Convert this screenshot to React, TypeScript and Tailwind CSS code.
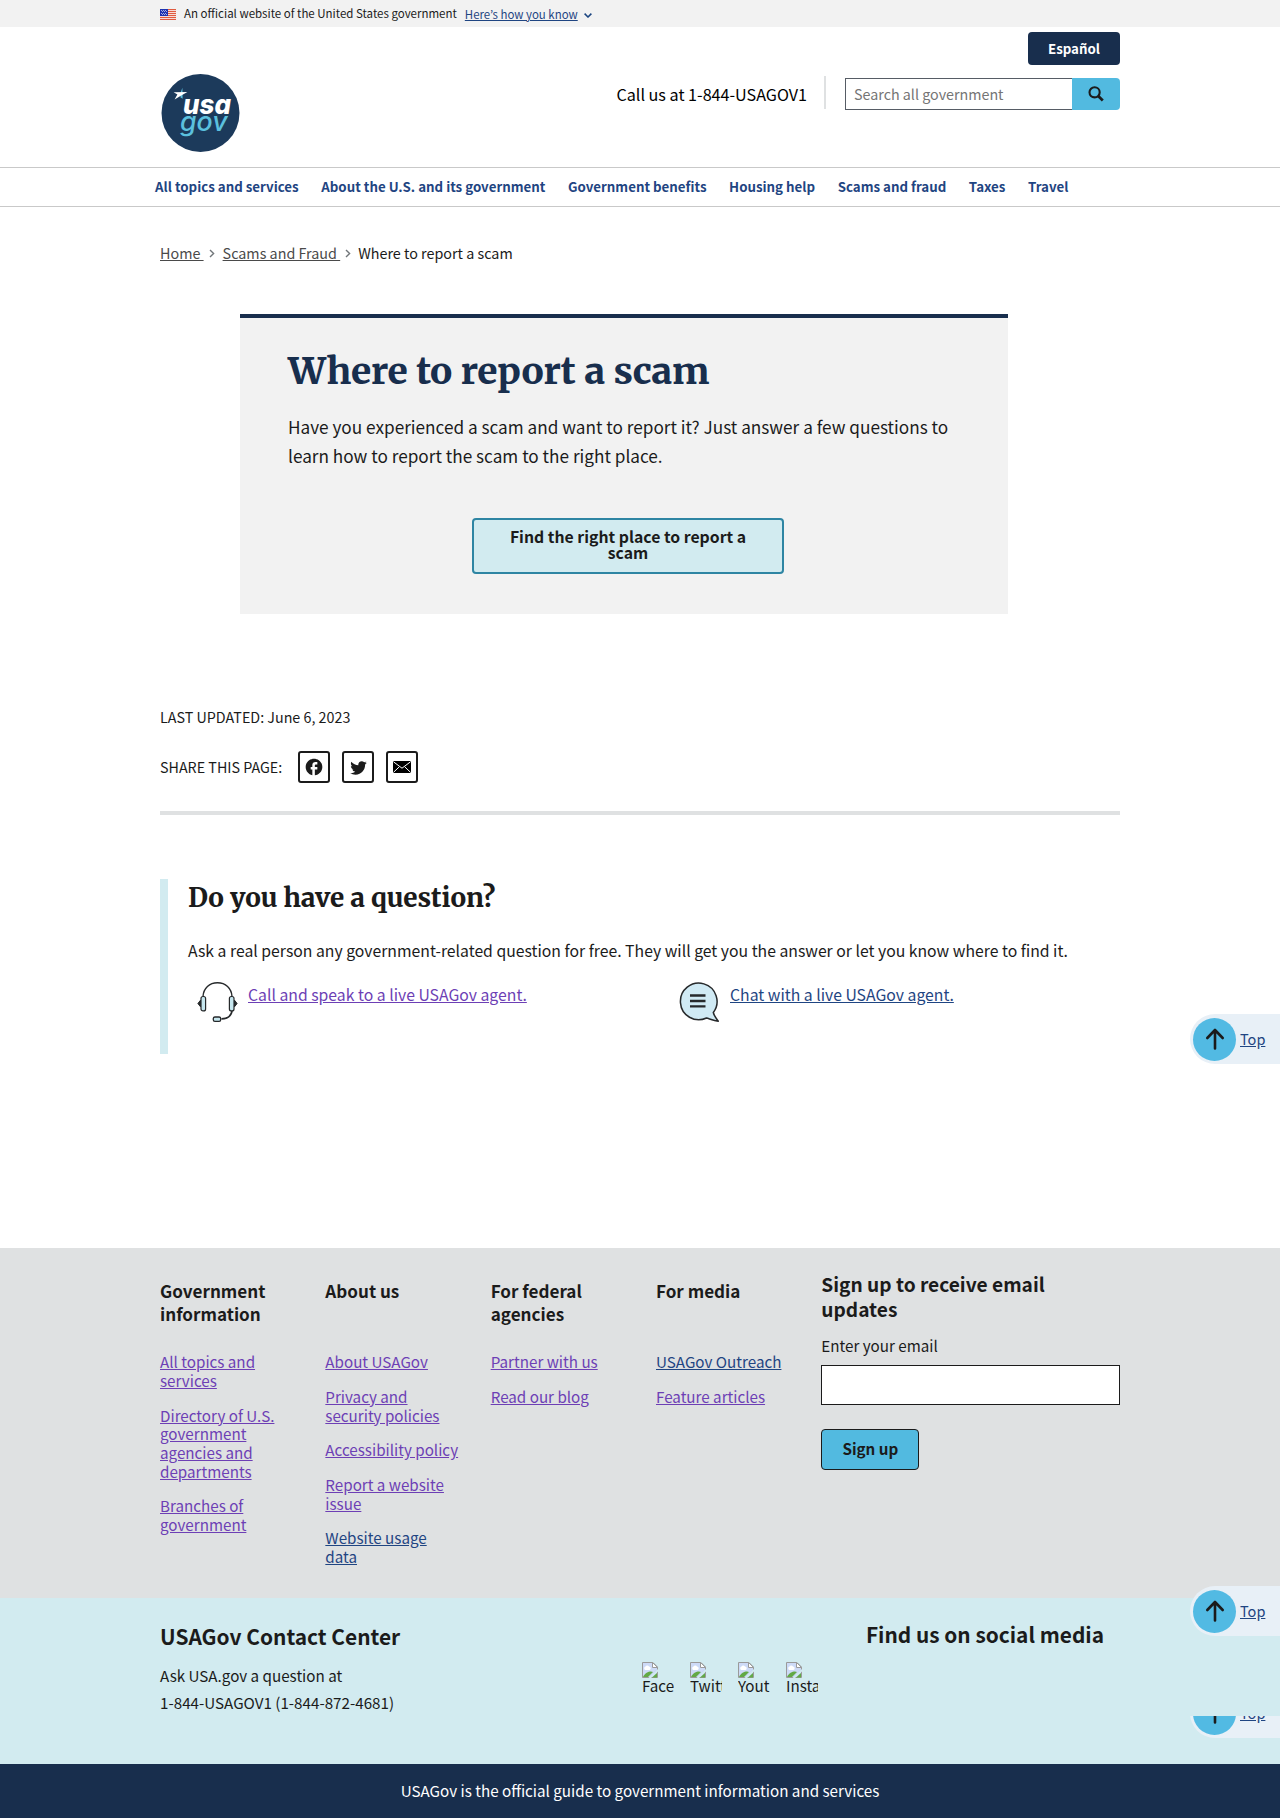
import React from "react";

const sans = "font-['Noto_Sans_CJK_KR','Source_Sans_Pro',sans-serif]";
const serif = "font-['Merriweather','DejaVu_Serif',serif]";

function Flag() {
  return (
    <svg width="16" height="11" viewBox="0 0 16 11" shapeRendering="crispEdges" className="block">
      <rect width="16" height="11" fill="#fff" />
      {[0, 2, 4, 6, 8, 10].map((y) => (
        <rect key={y} y={y} width="16" height="1" fill="#db3e1f" opacity=".85" />
      ))}
      {[1, 3, 5, 7, 9].map((y) => (
        <rect key={y} y={y} width="16" height="1" fill="#f6dcd6" />
      ))}
      <rect width="8" height="7" fill="#1e33b1" />
      {[
        [1, 1], [3, 1], [5, 1], [2, 2], [4, 2], [6, 2], [1, 4], [3, 4], [5, 4], [2, 5], [4, 5], [6, 5],
      ].map(([x, y]) => (
        <rect key={`${x}-${y}`} x={x} y={y} width="1" height="1" fill="#a5addf" />
      ))}
    </svg>
  );
}

function Logo() {
  return (
    <svg width="80" height="80" viewBox="0 0 80 80" className="block">
      <circle cx="40.5" cy="40" r="39" fill="#1c3a5b" />
      <path d="M20.800 18.900 22.400 14.800 22.600 25.800 20.400 24.200Z" fill="#5bc0de" />
      <path d="M13.600 19.300 27.400 18.900 21.200 22.400 14.600 26.600 17.400 21.600Z" fill="#fff" />
      <text x="23" y="40.800" fontFamily="Inter, Open Sans" fontStyle="italic" fontWeight="800" fontSize="27.500" textLength="48" lengthAdjust="spacingAndGlyphs" fill="#fff" className="[font-feature-settings:'cv11']">usa</text>
      <text x="20" y="58.300" fontFamily="Inter, Open Sans" fontStyle="italic" fontWeight="500" fontSize="26" textLength="47.500" lengthAdjust="spacingAndGlyphs" fill="#5bc0de">gov</text>
    </svg>
  );
}

function Headset() {
  return (
    <svg width="42" height="42" viewBox="0 0 42 42" fill="none" stroke="#26292b" className="block">
      <path d="M6 15.5C6.5 7 12.500 1.800 20.500 1.800S34.500 7 35 15.500" strokeWidth="1.400" />
      <path d="M35.200 29C34.500 34.500 30.500 37.800 24.500 37.900" strokeWidth="1.700" />
      <path d="M3.500 19.200 0.900 22.500 3.500 25.800ZM37.500 19.200 40.100 22.500 37.500 25.800Z" fill="#26292b" />
      <rect x="4" y="15.500" width="4.600" height="14.400" rx="2" fill="#c5e6ee" strokeWidth="1.200" />
      <rect x="32.400" y="15.500" width="4.600" height="14.400" rx="2" fill="#c5e6ee" strokeWidth="1.200" />
      <rect x="16.300" y="36" width="7.400" height="4.400" rx="1.600" fill="#c5e6ee" strokeWidth="1.300" />
    </svg>
  );
}

function Chat() {
  return (
    <svg width="42" height="42" viewBox="0 0 42 42" className="block" stroke="#26292b">
      <path d="M34.300 31.500A18.300 18.300 0 1 0 27.500 37C31 38 35 39.500 39.300 40.200 37.500 37.500 35 35 34.300 31.500Z" fill="#d0eaf4" strokeWidth="1.500" strokeLinejoin="round" />
      <path d="M11 14.500H26.500M11 20H26.500M11 25.300H26.500" strokeWidth="2.300" />
    </svg>
  );
}

function BrokenImage() {
  return (
    <svg width="16" height="16" viewBox="0 0 16 16" className="block">
      <path d="M.5 .5H11L15.500 5V15.500H.5Z" fill="#c5d5f5" stroke="#9a9a9a" />
      <path d="M1 1H10.500V5.500H15V7L6 15H1Z" fill="#cddaf7" />
      <path d="M3 8a2 2 0 0 1 .5-3.500 2 2 0 0 1 3.500 0A1.800 1.800 0 0 1 7.500 8Z" fill="#fff" />
      <path d="M1 15C3 11 6 9.500 9 9.500L11 10 6 15Z" fill="#62a945" />
      <path d="M16 7 6.500 16H9L16 9.500Z" fill="#d2ebf0" />
      <path d="M10 15.500 15 11V15.500Z" fill="#62a945" />
      <path d="M10.500 .5V5.500H15.500Z" fill="#fff" stroke="#9a9a9a" />
    </svg>
  );
}

function TopLink() {
  return (
    <a className="flex h-[50px] w-[90px] items-center rounded-l-full bg-[#e8f0f7] pl-[3px] text-[#1f4582]">
      <span className="flex size-[43px] shrink-0 items-center justify-center rounded-full bg-[#52bae3]">
        <svg width="20" height="24" viewBox="0 0 20 24" fill="none" stroke="#1b1b1b" strokeWidth="2.600" strokeLinecap="round" strokeLinejoin="round">
          <path d="M10 21.500V3M2.300 11 10 3 17.700 11" />
        </svg>
      </span>
      <span className="-mt-px ml-1 text-[14.500px] leading-6 underline underline-offset-1">Top</span>
    </a>
  );
}

function Chevron() {
  return (
    <svg width="6" height="9" viewBox="0 0 6 9" fill="none" stroke="#71767a" strokeWidth="1.400" className="mt-px shrink-0">
      <path d="M1 1 4.600 4.500 1 8" />
    </svg>
  );
}

const nav = [
  "All topics and services",
  "About the U.S. and its government",
  "Government benefits",
  "Housing help",
  "Scams and fraud",
  "Taxes",
  "Travel",
];

type FooterItem = { text: string; fresh?: boolean };
const columns: { title: string; items: FooterItem[] }[] = [
  {
    title: "Government information",
    items: [
      { text: "All topics and services" },
      { text: "Directory of U.S. government agencies and departments" },
      { text: "Branches of government" },
    ],
  },
  {
    title: "About us",
    items: [
      { text: "About USAGov" },
      { text: "Privacy and security policies" },
      { text: "Accessibility policy" },
      { text: "Report a website issue" },
      { text: "Website usage data", fresh: true },
    ],
  },
  { title: "For federal agencies", items: [{ text: "Partner with us" }, { text: "Read our blog" }] },
  { title: "For media", items: [{ text: "USAGov Outreach", fresh: true }, { text: "Feature articles" }] },
];

const shareBox = "flex size-8 items-center justify-center rounded-[3px] border-2 border-[#1b1b1b]";

export default function App() {
  return (
    <div className={`relative h-[1818px] w-[1280px] overflow-hidden bg-white text-[#1b1b1b] ${sans}`}>
      <div className="h-[27px] bg-[#f2f2f2]">
        <div className="mx-auto flex h-full w-[960px] items-center">
          <div className="mt-[2px]"><Flag /></div>
          <span className="-mt-px ml-2 text-[11.500px] leading-4 whitespace-nowrap">An official website of the United States government</span>
          <a className="mt-px ml-2 text-[11.450px] leading-4 whitespace-nowrap text-[#1f4582] underline underline-offset-1">Here’s how you know</a>
          <svg width="8" height="5" viewBox="0 0 8 5" fill="none" stroke="#1a4480" strokeWidth="1.500" className="mt-[3px] ml-1.5"><path d="M.6 .6 4 4 7.400 .6" /></svg>
        </div>
      </div>

      <header className="mx-auto flex h-[140px] w-[960px] justify-between">
        <div className="pt-[46px]"><Logo /></div>
        <div className="flex flex-col items-end pt-[5px]">
          <button className="h-[33px] w-[92px] rounded bg-[#182e4d] text-[13.300px] leading-4 font-bold text-white">Español</button>
          <div className="mt-[13px] flex h-8 items-center">
            <span className="text-[16.150px] leading-6 whitespace-nowrap text-black">Call us at 1-844-USAGOV1</span>
            <div className="mr-[19px] ml-[17px] -mt-[3px] h-[33px] w-[2px] bg-[#dfe1e2]" />
            <div className="flex h-8 w-[227px] items-center border border-r-0 border-[#565c65] pl-2 text-[14.300px] leading-5 text-[#757575]">Search all government</div>
            <button className="flex h-8 w-12 items-center justify-center rounded-r bg-[#52bae0]">
              <svg width="16" height="16" viewBox="0 0 16 16" fill="none" stroke="#1b1b1b" strokeWidth="2.100"><circle cx="6.600" cy="6.300" r="5.100" /><path d="M10.200 10 14.800 14.500" strokeWidth="2.700" /></svg>
            </button>
          </div>
        </div>
      </header>

      <nav className="h-10 border-y border-[#c9c9c9]">
        <div className="mx-auto flex h-full w-[970px] items-center gap-[22.600px]">
          {nav.map((n) => (
            <a key={n} className="text-[13.300px] leading-5 font-bold whitespace-nowrap text-[#1f4582]">{n}</a>
          ))}
        </div>
      </nav>

      <main className="mx-auto h-[1041px] w-[960px] pt-[36px]">
        <div className="flex h-5 items-center text-[14.350px] leading-5 whitespace-pre">
          <a className="text-[#4a4a4a] underline underline-offset-1">Home </a>
          <span className="mr-[8px] ml-[5px]"><Chevron /></span>
          <a className="text-[#4a4a4a] underline underline-offset-1">Scams and Fraud </a>
          <span className="mr-[7px] ml-[5px]"><Chevron /></span>
          <span>Where to report a scam</span>
        </div>

        <section className="mt-[51px] ml-20 h-[300px] w-[768px] border-t-4 border-[#182e4d] bg-[#f2f2f2] px-12 pt-[30px]">
          <h1 className={`h-[46px] text-[37px] leading-[46px] font-extrabold tracking-[-0.210px] whitespace-nowrap text-[#182e4d] ${serif}`}>Where to report a scam</h1>
          <p className="mt-[18px] w-[672px] text-[17.200px] leading-[29px]">Have you experienced a scam and want to report it? Just answer a few questions to learn how to report the scam to the right place.</p>
          <button className="mt-[48px] ml-[184px] h-14 w-[312px] rounded border-2 border-[#2e85a3] bg-[#d2ebf0] px-6 pb-[2px] text-[15.800px] leading-4 font-bold">Find the right place to report a scam</button>
        </section>

        <div className="mt-[93px] text-[14.300px] leading-5">LAST UPDATED: June 6, 2023</div>
        <div className="mt-[24px] flex h-8 items-center">
          <span className="text-[14.300px] leading-5">SHARE THIS PAGE:</span>
          <div className="ml-4 flex gap-3">
            <a className={shareBox}><svg width="20" height="20" viewBox="0 0 24 24" fill="#1b1b1b"><path d="M22 12c0-5.520-4.480-10-10-10S2 6.480 2 12c0 4.840 3.440 8.870 8 9.800V15H8v-3h2V9.500C10 7.570 11.570 6 13.500 6H16v3h-2c-.55 0-1 .45-1 1v2h3v3h-3v6.950c5.050-.5 9-4.760 9-9.950z" /></svg></a>
            <a className={shareBox}><svg width="19" height="19" viewBox="0 0 24 24" fill="#1b1b1b"><path d="M22.460 6c-.77.35-1.600.58-2.460.69.88-.53 1.560-1.370 1.880-2.380-.83.5-1.750.85-2.720 1.050C18.370 4.500 17.260 4 16 4c-2.350 0-4.270 1.920-4.270 4.290 0 .34.04.67.11.98C8.280 9.090 5.110 7.380 3 4.790c-.37.63-.58 1.370-.58 2.150 0 1.490.75 2.810 1.910 3.560-.71 0-1.370-.2-1.950-.5v.03c0 2.080 1.480 3.820 3.440 4.210a4.220 4.220 0 0 1-1.930.07 4.280 4.280 0 0 0 4 2.980 8.521 8.521 0 0 1-5.330 1.840c-.34 0-.68-.02-1.020-.06C3.440 20.290 5.700 21 8.120 21 16 21 20.330 14.460 20.330 8.790c0-.19 0-.37-.01-.56.84-.6 1.560-1.360 2.140-2.230z" /></svg></a>
            <a className={shareBox}><svg width="18" height="12" viewBox="0 0 18 12"><rect width="18" height="12" rx="1" fill="#000" /><path d="M.5 .8 9 7.200 17.500 .8M.5 11.300 6.300 5.800M17.500 11.300 11.700 5.800" fill="none" stroke="#fff" strokeWidth="1" /></svg></a>
          </div>
        </div>
        <div className="mt-7 h-1 bg-[#dfe1e2]" />

        <section className="mt-16 h-[175px] border-l-8 border-[#d2ebf0] pl-5">
          <h2 className={`h-9 pt-px text-[26px] leading-9 font-extrabold tracking-[-0.090px] whitespace-nowrap ${serif}`}>Do you have a question?</h2>
          <p className="mt-6 text-[15.770px] leading-6 whitespace-nowrap">Ask a real person any government-related question for free. They will get you the answer or let you know where to find it.</p>
          <div className="mt-[18px] flex pl-[9px]">
            <div className="flex w-[482px]"><Headset /><a className="ml-[9px] -mt-px text-[15.770px] leading-[29px] text-[#6d3fb5] underline underline-offset-1">Call and speak to a live USAGov agent.</a></div>
            <div className="flex"><Chat /><a className="ml-[9px] -mt-px text-[15.770px] leading-[29px] text-[#1f4582] underline underline-offset-1">Chat with a live USAGov agent.</a></div>
          </div>
        </section>
      </main>

      <footer>
        <div className="h-[350px] bg-[#dfe1e2]">
          <div className="mx-auto flex h-full w-[960px]">
            {columns.map((c) => (
              <div key={c.title} className="w-[165.330px] shrink-0 pt-[31px]">
                <h3 className="h-[46px] w-[130px] text-[17.100px] leading-[23px] font-bold">{c.title}</h3>
                <ul className="mt-[27.400px] flex w-[136px] flex-col gap-4 text-[15.200px] leading-[18.660px]">
                  {c.items.map((i) => (
                    <li key={i.text} className={i.fresh ? "text-[#1f4582]" : "text-[#6d3fb5]"}><a className="underline underline-offset-1">{i.text}</a></li>
                  ))}
                </ul>
              </div>
            ))}
            <div className="w-[299px] pt-[24px]">
              <h3 className="w-[260px] text-[19.150px] leading-[25px] font-bold">Sign up to receive email updates</h3>
              <label className="mt-[11px] block text-[15.200px] leading-6">Enter your email</label>
              <div className="mt-[8px] h-10 border border-[#1b1b1b] bg-white" />
              <button className="mt-6 h-[41px] w-[98px] rounded border border-[#1b1b1b] bg-[#52bae0] pb-[3px] text-[15.200px] leading-4 font-bold">Sign up</button>
            </div>
          </div>
        </div>
        <div className="h-[166px] bg-[#d2ebf0]">
          <div className="mx-auto flex w-[960px] justify-between">
            <div className="w-[300px] pt-[23px]">
              <h3 className="text-[20.900px] leading-[30px] font-bold whitespace-nowrap">USAGov Contact Center</h3>
              <p className="mt-[11px] text-[15.200px] leading-[27px]">Ask USA.gov a question at<br />1-844-USAGOV1 (1-844-872-4681)</p>
            </div>
            <div className="w-[478px] pt-[21px]">
              <h3 className="pr-4 text-right text-[20.850px] leading-[30px] font-bold whitespace-nowrap">Find us on social media</h3>
              <div className="mt-[13px] flex gap-4">
                {["Facebook", "Twitter", "Youtube", "Instagram"].map((s) => (
                  <a key={s} className="block h-8 w-8 overflow-hidden">
                    <BrokenImage />
                    <span className="-mt-[1.500px] block text-[15.200px] leading-4">{s}</span>
                  </a>
                ))}
              </div>
            </div>
          </div>
        </div>
        <div className="flex h-[54px] items-center justify-center bg-[#182e4d] pb-[2px] text-[15.200px] leading-6 text-white">USAGov is the official guide to government information and services</div>
      </footer>

      <div className="absolute top-[1014px] right-0"><TopLink /></div>
      <div className="absolute top-[1586px] right-0"><TopLink /></div>
      <div className="absolute top-[1716px] right-0 flex h-[22px] items-end overflow-hidden"><TopLink /></div>
    </div>
  );
}
